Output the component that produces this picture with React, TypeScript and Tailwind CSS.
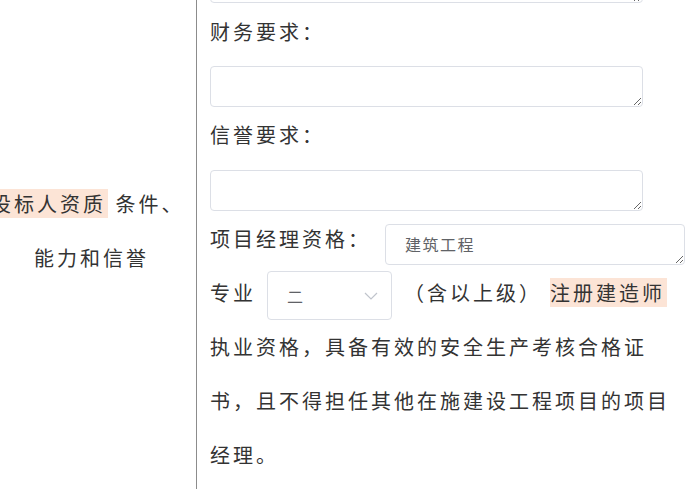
import React from "react";

const cjk = "font-['Noto_Sans_CJK_SC','Noto_Sans',sans-serif]";
const box = "block resize-y rounded-[4px] border border-[#dcdfe6] bg-white outline-none";

function Mark({ children, className = "" }: { children: React.ReactNode; className?: string }) {
  return <span className={`bg-[#fce4d6] ${className}`}>{children}</span>;
}

function FakeSelect({ value }: { value: string }) {
  return (
    <span className="ml-[11px] mr-[12px] inline-flex h-[49px] w-[125px] items-center justify-between rounded-[4px] border border-[#dcdfe6] bg-white pl-[19px] pr-[13px] align-middle text-[16px] leading-none tracking-normal text-[#606266]">
      <span>{value}</span>
      <svg width="14" height="8" viewBox="0 0 14 8" fill="none" className="text-[#c0c4cc]">
        <path d="M1 1l6 6 6-6" stroke="currentColor" strokeWidth="1.2" />
      </svg>
    </span>
  );
}

export default function App() {
  return (
    <div className={`flex h-[489px] w-[700px] overflow-hidden bg-white text-[20px] tracking-[3px] text-[#333] ${cjk}`}>
      {/* left cell */}
      <div className="w-[197px] shrink-0 overflow-hidden border-r border-[#8c8c8c] pt-[177px] leading-[54px]">
        <div className="-ml-[9px] whitespace-nowrap">
          <Mark className="pr-[2px]">投标人资质</Mark> 条件、
        </div>
        <div className="pl-[34px] whitespace-nowrap">能力和信誉</div>
      </div>

      {/* right cell */}
      <div className="min-w-0 flex-1 pl-[13px] pr-[15px]">
        <textarea className={`${box} -mt-[38px] h-[41px] w-[433px]`} />

        <div className="mt-[2px] leading-[54px]">财务要求：</div>
        <textarea className={`${box} mt-[7px] h-[41px] w-[433px]`} />

        <div className="mt-[1px] leading-[54px]">信誉要求：</div>
        <textarea className={`${box} mt-[8px] h-[41px] w-[433px]`} />

        <div className="mt-[13px] flex items-start">
          <div className="w-[175px] shrink-0 whitespace-nowrap leading-[30px]">项目经理资格：</div>
          <textarea
            defaultValue="建筑工程"
            rows={1}
            className={`${box} h-[41px] w-[300px] px-[19px] pt-[9px] text-[16px] leading-[20px] tracking-[1.5px] text-[#606266]`}
          />
        </div>

        <p className="mt-[1px] leading-[54px]">
          专业<FakeSelect value="二" />（含以上级）<Mark className="ml-[8px] pr-[2px]">注册建造师</Mark>
          执业资格，具备有效的安全生产考核合格证书，且不得担任其他在施建设工程项目的项目经理。
        </p>
      </div>
    </div>
  );
}
